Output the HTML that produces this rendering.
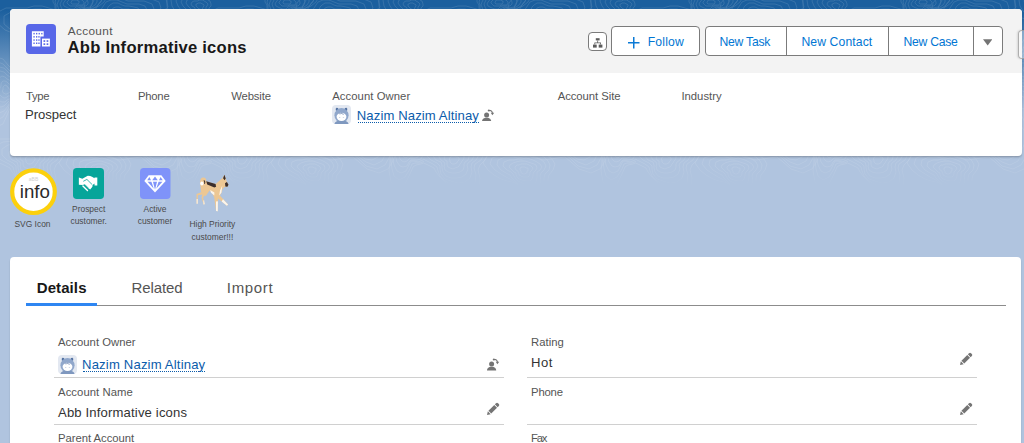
<!DOCTYPE html>
<html lang="en">
<head>
<meta charset="utf-8">
<title>Abb Informative icons | Account | Salesforce</title>
<style>
*{box-sizing:border-box;margin:0;padding:0}
html,body{width:1024px;height:443px;overflow:hidden}
body{position:relative;background:#b0c4df;font-family:"Liberation Sans",sans-serif;color:#181818}
.abs,.tx,.lbl{position:absolute}
.band{left:0;top:0;width:1024px;height:188px;background:linear-gradient(to bottom,#1b5f9e 0,#1b5f9e 10px,rgba(176,196,223,0) 112px)}
.band svg{position:absolute;left:0;top:0}
.card{background:#fff;border-radius:4px;box-shadow:0 2px 2px rgba(0,0,0,.10),0 1px 1px rgba(0,0,0,.12)}
#hl{left:10px;top:8.5px;width:1011.5px;height:147px;overflow:hidden}
#hl .hd{left:0;top:0;width:100%;height:64px;background:#f3f3f3}
#tabs{left:10.3px;top:256.5px;width:1010.7px;height:200px}
.tx{white-space:nowrap;line-height:20px;height:20px;text-decoration:none}

.dot{height:0;border-top:1px dotted #0b5cab}
.btn{background:#fff;border:1px solid #7b7b7b;border-radius:4px}
.sep{width:1px;background:#7b7b7b}
.hr{height:1px;background:#d0d0d0}
.lbl{font-size:8.44px;line-height:12.2px;color:#4a4a4a;text-align:center;white-space:nowrap;transform:translateX(-50%)}
</style>
</head>
<body>
<div class="abs band">
<svg width="1024" height="188" viewBox="0 0 1024 188"><defs><pattern id="ct" width="212" height="188" patternUnits="userSpaceOnUse"><path d="M43 30 42 31 42 32 41 32 40 33 40 33 39 34 37 34 36 34 35 34 34 33 34 32 34 31 34 30 34 29 34 28 34 28 35 27 36 26 37 26 39 26 40 27 41 27 42 27 43 28 43 29ZM48 30 46 32 45 33 44 34 43 36 41 37 39 38 37 39 34 39 32 37 31 35 31 33 31 31 30 30 29 28 29 26 30 25 32 24 34 23 37 22 39 23 41 24 43 24 46 25 48 26 49 28ZM52 30 49 32 48 34 47 36 46 39 43 41 40 42 36 44 31 43 28 41 28 37 28 34 28 32 25 30 24 27 24 24 26 22 29 20 32 19 36 18 40 19 43 21 46 21 50 22 53 24 54 27ZM56 30 52 33 51 35 51 39 49 42 46 45 41 47 35 48 29 47 26 44 25 39 26 35 25 32 21 30 18 26 18 22 22 19 26 17 31 15 36 15 40 16 44 17 48 18 54 19 58 22 59 26ZM60 30 55 33 54 36 54 41 53 47 48 51 42 53 34 53 28 51 24 46 23 40 24 35 22 33 17 30 12 25 12 19 17 16 23 14 29 12 35 11 41 12 46 14 51 16 57 17 63 20 64 25ZM64 30 58 34 57 38 59 44 57 52 51 57 42 58 34 56 27 53 22 48 22 41 22 36 19 34 11 30 4 24 4 16 11 12 20 10 28 10 35 9 41 9 47 11 53 13 61 15 67 18 69 24ZM68 30 62 35 61 39 63 47 62 57 54 63 43 63 33 59 26 54 21 49 20 42 20 37 15 34 5 30 -4 22 -4 13 6 8 18 8 27 8 34 6 42 6 49 8 56 10 64 12 72 16 74 23ZM126 14 126 15 126 16 124 16 123 16 122 16 121 17 119 17 118 17 116 17 115 16 115 16 114 15 114 14 115 13 115 13 116 12 117 11 118 10 119 11 121 11 122 11 123 11 124 12 125 12 126 13ZM133 14 133 16 131 17 128 18 125 18 123 19 121 20 119 21 115 21 112 21 110 19 109 17 109 16 109 14 110 12 111 11 112 10 113 8 116 7 119 7 121 8 123 9 126 9 129 9 131 10 133 12ZM140 14 138 17 136 19 131 20 127 20 124 21 122 23 118 25 113 26 108 24 106 22 104 19 104 16 104 14 105 12 107 10 108 7 110 5 113 3 118 3 122 5 125 6 129 6 134 7 138 8 140 11ZM146 14 143 17 139 20 134 22 129 22 126 23 122 26 117 29 109 31 103 28 101 24 100 20 99 17 99 14 100 11 102 8 104 5 106 2 111 -0 117 -0 122 2 127 4 132 4 139 4 145 6 147 10ZM151 14 147 18 142 21 137 23 132 24 128 26 123 30 116 34 106 36 99 33 96 27 97 21 96 17 95 14 95 10 97 7 99 3 103 -1 109 -4 116 -4 123 -1 128 1 135 1 144 1 152 4 154 9ZM156 14 149 18 144 22 140 24 135 27 130 29 124 34 115 40 103 41 94 37 93 29 95 22 95 18 92 14 90 10 91 5 94 0 99 -4 106 -8 116 -8 124 -5 130 -2 138 -2 149 -2 159 2 161 8ZM160 14 151 19 146 22 142 26 138 30 133 34 125 40 114 46 99 47 90 40 90 30 94 22 94 18 88 14 84 9 85 3 89 -2 95 -8 104 -12 115 -12 124 -8 132 -5 141 -4 154 -4 166 -1 168 7ZM184 70 184 71 184 72 183 73 183 75 182 75 181 75 180 74 179 74 178 73 177 73 176 72 176 71 175 70 175 69 176 67 177 67 178 66 179 66 180 66 180 65 182 65 183 66 183 67 184 68 184 69ZM189 70 188 72 187 74 187 77 186 79 183 80 181 80 179 78 178 77 176 77 174 76 172 75 171 73 170 70 170 67 171 65 173 63 176 63 178 63 179 62 181 61 183 60 185 61 187 63 188 65 188 68ZM193 70 192 73 191 77 190 80 188 83 185 85 182 84 179 82 177 80 174 80 171 80 167 78 165 74 165 70 165 66 167 62 171 61 174 60 177 60 179 58 182 56 185 55 188 56 190 60 191 63 192 67ZM197 70 196 75 195 79 193 83 191 88 187 90 182 89 178 85 176 83 172 83 167 83 162 81 159 76 159 70 161 65 164 61 168 58 173 58 176 58 178 54 182 50 187 48 192 51 194 56 195 61 196 65ZM201 70 201 76 199 81 196 86 193 91 188 94 182 93 178 89 175 86 170 87 162 88 156 85 153 78 154 70 158 64 162 59 167 56 171 56 175 54 178 50 183 44 190 41 195 45 197 52 198 59 199 65ZM204 70 205 77 203 84 199 89 195 95 190 99 183 98 178 93 173 90 167 91 158 92 149 88 147 79 150 70 155 63 160 58 165 55 170 53 174 51 177 44 184 37 192 33 199 39 201 49 201 58 202 64ZM207 70 210 78 207 86 203 93 197 98 191 102 183 102 177 98 172 95 164 96 153 97 143 92 140 81 147 70 155 63 160 58 164 54 168 50 172 46 177 38 184 29 195 26 203 33 204 46 202 57 203 63ZM77 95 77 96 77 97 75 98 73 98 72 98 71 99 69 99 68 99 66 99 65 98 64 97 63 96 64 95 64 94 65 93 65 92 66 91 68 91 69 91 71 91 72 91 73 92 74 92 75 93 76 94ZM84 95 85 98 84 100 80 101 76 101 73 101 71 102 69 103 65 103 62 102 60 101 58 99 57 97 57 95 59 93 60 91 61 89 62 87 65 86 68 86 71 87 74 88 76 89 79 90 81 91 83 93ZM92 95 93 99 90 102 84 104 78 103 75 103 72 105 68 107 63 108 58 107 54 104 51 102 50 98 51 95 53 92 55 90 56 87 58 83 62 81 68 82 72 84 75 85 79 86 83 87 87 89 90 92ZM100 95 100 100 96 104 88 106 80 105 76 105 72 108 67 112 60 114 53 112 49 108 46 104 44 99 45 95 48 91 51 88 52 84 54 80 60 77 67 77 73 80 77 82 82 83 89 84 95 86 98 90ZM108 95 106 101 100 106 91 108 82 107 77 107 73 112 66 117 56 120 47 117 43 111 40 106 39 100 40 95 43 90 46 87 48 82 51 76 57 72 66 73 73 77 79 80 85 80 95 80 103 83 107 89ZM114 95 110 102 103 107 93 109 84 109 78 110 74 116 65 124 52 127 42 123 37 115 36 107 35 101 36 95 38 90 42 85 43 79 47 72 55 67 65 68 74 73 80 77 89 76 101 76 111 80 116 87ZM120 95 113 102 105 107 95 110 86 111 80 113 75 121 64 131 48 135 35 129 32 118 34 108 33 101 32 95 33 89 36 83 39 76 43 68 52 62 64 63 75 69 82 74 92 73 107 72 121 77 124 86ZM155 140 155 141 155 142 154 143 154 144 152 145 151 145 149 144 148 144 147 143 146 142 146 142 145 141 144 140 144 139 144 138 145 137 147 136 148 136 149 136 151 136 152 136 153 137 154 137 155 138 156 139ZM161 140 160 142 159 144 159 146 158 148 155 150 152 150 149 148 146 147 144 146 143 145 142 143 140 142 138 140 137 138 137 135 140 134 144 133 146 133 149 132 151 132 154 132 156 133 159 134 161 136 162 138ZM167 140 165 143 164 145 163 149 162 153 158 155 152 154 148 152 145 150 142 148 139 147 137 145 134 143 131 140 129 136 131 132 135 130 141 130 145 130 148 129 152 128 156 128 160 129 163 131 166 134 167 137ZM173 140 170 144 169 147 168 152 166 157 160 160 153 159 148 155 144 152 140 151 136 150 131 147 127 144 123 140 121 135 124 130 131 127 139 128 144 128 148 126 153 124 158 123 164 125 168 128 171 132 173 136ZM178 140 176 145 174 149 173 155 170 161 162 165 154 162 147 157 143 154 138 153 131 152 124 150 119 146 115 140 114 133 118 127 127 125 137 126 143 126 147 124 153 120 161 118 168 121 172 125 176 130 179 135ZM184 140 182 146 179 151 177 158 173 165 165 169 154 166 147 159 142 155 136 155 126 156 116 153 110 147 107 140 107 132 113 125 124 123 136 124 143 125 147 121 154 115 164 112 173 115 177 122 181 128 184 134ZM190 140 188 147 184 153 181 161 176 169 167 173 155 169 147 162 141 157 133 158 120 160 107 157 100 149 99 140 102 131 110 124 122 122 135 123 142 124 147 118 155 110 167 105 178 110 183 118 185 126 188 133ZM35 160 34 161 34 161 33 162 33 163 32 163 31 164 29 164 28 164 27 163 26 162 26 161 26 161 26 160 25 159 26 158 26 157 27 157 28 156 29 156 31 156 32 157 33 157 34 157 35 158 35 159ZM39 160 38 161 37 163 36 164 35 166 34 167 31 168 29 169 26 168 24 167 23 165 23 163 23 161 21 160 20 158 21 156 22 155 24 154 26 153 29 152 31 153 33 154 35 154 38 155 40 156 40 158ZM44 160 41 162 40 164 40 167 39 170 36 172 32 173 28 173 24 172 21 170 20 166 21 164 20 162 17 160 15 157 15 154 18 152 21 150 25 149 28 149 32 149 35 150 38 151 42 152 45 154 45 157ZM48 160 44 163 43 165 44 169 42 174 38 177 33 178 27 178 22 176 19 172 18 168 18 165 17 162 12 160 9 156 9 152 13 149 18 147 23 146 28 145 32 146 36 147 40 148 45 150 49 152 50 156ZM52 160 48 163 47 167 48 172 46 178 41 182 34 183 27 181 21 179 17 174 16 169 16 166 13 163 7 160 2 155 2 149 8 145 15 144 22 143 27 142 33 143 38 144 43 146 49 147 54 150 55 155ZM57 160 51 164 50 168 52 175 51 183 44 188 34 187 26 184 20 180 16 176 14 171 13 167 9 164 1 160 -6 153 -5 146 3 142 13 141 21 141 27 140 33 139 40 141 46 143 52 145 58 149 60 154ZM61 160 56 165 54 170 56 178 55 188 47 193 35 192 26 186 20 181 15 176 12 172 10 168 4 165 -7 160 -15 152 -13 143 -2 139 11 139 20 140 27 138 34 136 41 137 49 139 56 143 63 147 65 153ZM109 60 109 61 109 61 108 62 108 62 107 62 106 62 106 62 105 62 104 62 104 62 103 61 103 61 103 60 103 59 104 59 104 58 104 58 105 58 106 58 106 58 107 58 107 58 108 59 108 59 109 59ZM113 60 113 61 112 63 111 63 109 63 108 63 107 64 105 64 104 64 103 64 101 63 100 62 100 61 100 60 101 59 101 58 102 57 102 56 104 55 105 55 107 56 108 56 109 57 110 57 111 58 112 59ZM116 60 116 62 115 64 113 65 110 65 108 65 107 65 105 66 103 67 101 66 99 65 98 64 97 62 97 60 98 59 99 57 100 56 101 54 103 53 105 53 107 54 108 55 110 55 112 56 114 57 115 58ZM120 60 120 63 118 65 114 66 111 66 109 66 107 67 105 69 101 70 98 69 96 67 95 65 94 62 95 60 96 58 97 56 98 54 99 52 101 50 105 51 107 52 109 53 112 54 114 54 117 55 119 58ZM123 60 123 63 120 66 116 67 112 66 109 66 107 69 104 72 100 73 96 72 94 69 92 66 92 63 92 60 94 58 95 55 96 53 97 50 100 48 104 48 107 50 110 52 113 52 117 52 121 54 123 57ZM126 60 125 64 122 67 117 68 112 67 110 68 108 71 104 75 98 77 93 75 91 71 90 67 90 63 90 60 92 57 93 55 94 51 95 48 99 45 104 46 108 49 111 50 114 50 120 50 125 52 127 56ZM129 60 126 64 123 67 118 68 113 68 110 69 108 73 103 79 96 81 90 78 89 72 89 67 89 63 88 60 89 57 91 54 92 50 94 46 98 43 103 43 108 47 111 49 116 48 123 48 129 50 131 55ZM204 6 203 7 203 7 203 8 202 9 202 9 201 10 200 9 199 9 198 8 198 8 197 7 197 7 196 6 196 5 196 4 197 4 198 3 199 3 200 3 200 3 201 3 202 4 203 4 203 4 204 5ZM207 6 206 7 206 9 206 10 205 12 203 13 201 13 199 12 197 12 196 11 195 9 195 8 194 7 192 6 191 4 192 2 194 1 196 1 198 1 199 0 201 0 203 0 204 1 206 2 207 3 208 4ZM211 6 209 8 209 10 209 12 208 15 205 17 202 17 199 15 197 14 195 12 193 11 192 10 190 8 188 6 186 3 187 0 190 -1 194 -1 197 -2 199 -2 201 -3 204 -3 206 -2 208 -0 210 1 211 4ZM214 6 213 9 212 11 212 15 210 19 207 21 202 20 198 18 196 15 193 14 191 13 189 11 186 9 183 6 181 2 183 -2 187 -4 192 -3 196 -3 199 -4 202 -6 205 -6 209 -4 211 -2 214 -0 215 3ZM218 6 216 9 215 13 215 17 213 22 208 25 202 23 198 19 195 17 192 15 188 15 185 13 181 10 178 6 176 1 178 -4 184 -6 191 -5 195 -4 198 -6 202 -9 207 -9 211 -8 214 -5 217 -2 219 2ZM222 6 220 10 218 14 218 19 216 25 210 28 203 26 198 21 195 17 191 17 185 17 180 15 175 11 172 6 171 -0 175 -5 182 -7 190 -6 195 -5 198 -8 203 -12 209 -13 214 -11 218 -7 220 -3 222 1ZM226 6 224 11 222 16 221 21 218 28 211 31 203 28 198 22 194 18 190 19 182 20 174 18 169 13 167 6 167 -1 172 -7 181 -8 190 -7 195 -6 198 -9 203 -15 211 -18 217 -15 221 -10 223 -4 226 1ZM10 90 10 91 10 92 9 93 8 93 7 94 6 94 6 94 5 94 4 93 3 93 3 92 2 91 3 90 3 89 3 88 3 87 4 86 5 85 6 85 6 86 7 86 8 87 8 88 9 88 9 89ZM14 90 14 93 14 95 12 96 10 96 8 96 7 97 5 98 4 98 2 97 1 96 -1 94 -1 92 -1 90 -0 88 1 86 1 84 2 82 3 81 5 81 7 82 8 83 9 84 11 85 11 86 13 88ZM18 90 19 94 17 97 14 99 11 99 9 99 7 100 5 102 2 102 -0 101 -2 99 -4 97 -5 93 -5 90 -3 87 -2 85 -2 82 -1 78 2 76 5 77 7 79 9 80 11 81 13 82 15 84 16 87ZM22 90 23 95 21 100 16 102 12 101 9 101 7 103 4 106 1 107 -3 106 -6 103 -8 99 -9 95 -8 90 -6 86 -4 83 -4 79 -3 74 0 71 4 72 7 75 10 77 13 78 16 79 18 82 21 85ZM27 90 27 96 24 102 18 104 13 102 10 102 8 106 4 111 -1 113 -6 111 -9 106 -11 101 -12 96 -11 90 -9 85 -7 82 -6 76 -5 70 -1 67 4 68 8 72 11 75 14 75 19 76 23 79 25 84ZM31 90 30 97 26 103 20 105 14 104 10 104 8 109 3 117 -3 120 -9 117 -12 110 -14 103 -14 96 -14 90 -11 85 -9 80 -8 74 -7 67 -2 62 3 64 8 69 11 72 16 72 22 72 28 76 30 82ZM35 90 32 98 27 104 21 106 14 105 11 106 8 113 3 124 -6 128 -12 123 -15 113 -16 104 -16 97 -16 90 -14 84 -12 78 -11 71 -9 63 -4 57 3 59 8 65 12 69 18 69 26 68 33 72 36 81ZM104 170 104 171 103 171 103 172 103 173 102 173 101 174 99 174 98 173 97 173 97 172 97 171 97 171 96 170 96 169 96 168 97 168 97 167 98 167 99 167 101 167 101 167 102 168 103 168 104 168 104 169ZM108 170 107 171 106 172 106 174 105 176 104 177 101 177 99 177 97 176 95 175 95 174 94 172 94 171 92 170 91 168 91 167 93 165 95 165 97 164 99 164 101 164 103 164 105 165 107 166 108 167 109 168ZM112 170 110 172 109 174 109 176 108 179 106 181 102 181 98 180 95 179 93 177 92 175 92 173 90 172 88 170 85 167 86 165 89 163 92 162 96 161 99 161 101 161 104 162 107 163 110 164 112 165 113 168ZM116 170 113 172 113 175 113 178 112 182 108 185 102 185 98 183 94 181 92 179 90 176 89 174 87 172 83 170 79 166 80 162 85 160 90 160 94 159 98 159 102 158 106 159 109 160 113 162 116 164 118 167ZM120 170 117 173 116 176 117 181 115 186 110 189 103 189 97 186 93 183 90 180 88 178 86 175 82 173 77 170 73 165 74 160 81 157 88 157 94 158 98 157 102 156 107 156 112 157 116 159 120 162 122 166ZM125 170 121 174 120 178 120 183 119 190 112 193 104 192 97 187 93 184 89 181 86 179 82 177 77 174 71 170 66 164 68 158 77 155 87 156 93 157 98 155 103 153 109 153 115 154 120 157 124 161 126 165ZM129 170 125 175 124 179 124 186 122 193 114 197 104 195 97 188 93 184 88 182 83 181 77 179 70 175 64 170 59 163 63 156 74 153 86 155 93 156 97 154 103 150 111 149 118 151 123 155 128 159 131 164ZM199 150 200 151 199 152 199 153 198 153 197 153 196 153 196 154 195 154 194 153 194 153 193 152 193 151 193 150 193 149 193 148 194 147 194 146 195 146 196 146 196 146 197 147 198 147 198 148 199 148 199 149ZM203 150 204 152 203 155 201 156 199 156 198 156 197 156 195 157 194 158 192 157 191 156 190 154 189 152 190 150 190 148 191 147 191 145 192 143 193 142 195 142 197 143 198 144 199 144 200 145 201 146 202 148ZM207 150 207 154 206 157 203 158 200 158 198 158 197 159 195 161 192 162 190 161 188 159 187 156 186 153 186 150 188 147 189 145 189 142 190 139 192 137 195 138 197 139 199 141 201 142 203 142 205 144 206 147ZM211 150 211 155 209 159 205 160 201 160 199 160 197 162 195 166 191 167 188 166 185 162 184 158 183 154 184 150 185 147 186 144 187 140 188 136 191 133 194 134 197 136 199 138 202 139 205 139 208 142 210 146ZM215 150 214 156 211 160 206 162 202 161 199 161 197 165 194 171 189 173 185 171 182 165 181 160 180 155 181 150 183 146 184 142 185 137 186 132 190 129 194 129 198 133 200 136 204 136 208 136 212 139 214 144ZM218 150 216 156 213 161 208 163 203 163 200 164 198 169 193 177 187 180 182 176 180 169 179 161 179 155 179 150 180 145 182 141 183 135 184 128 188 124 194 125 198 130 201 133 205 133 211 133 217 136 219 143ZM221 150 218 157 214 162 209 164 204 165 201 167 198 174 193 184 185 187 179 182 177 171 178 162 178 156 177 150 178 144 179 139 180 132 182 125 187 120 193 121 198 126 202 130 207 130 215 129 221 133 223 141ZM79 2 79 3 79 3 78 4 77 4 76 4 75 4 75 4 74 4 73 4 72 4 71 3 71 3 71 2 72 1 72 1 72 0 73 -0 74 -0 75 -0 75 -0 76 0 77 0 78 1 78 1 79 1ZM84 2 84 3 83 5 81 5 79 5 77 5 76 6 74 6 72 6 70 6 69 5 68 4 67 3 67 2 68 1 69 0 70 -1 70 -2 72 -3 74 -3 76 -2 77 -2 79 -1 80 -1 82 -0 83 1ZM88 2 88 4 86 6 83 6 80 6 78 6 76 7 74 9 71 9 68 8 66 7 64 6 63 4 64 2 65 1 66 -1 67 -2 68 -4 71 -5 74 -5 76 -4 78 -3 80 -3 83 -2 86 -1 87 0ZM93 2 92 5 90 7 85 8 81 7 78 8 76 9 73 11 69 12 65 11 62 9 61 7 60 4 61 2 62 0 64 -2 64 -4 66 -6 69 -8 73 -7 77 -6 79 -5 82 -5 86 -4 90 -3 92 -1ZM97 2 95 5 92 7 87 9 82 8 79 9 77 11 73 14 67 16 61 14 59 11 58 7 57 5 58 2 59 -0 61 -3 62 -5 64 -8 67 -10 73 -10 77 -8 80 -6 84 -6 90 -6 95 -4 97 -1ZM101 2 98 5 94 8 88 9 83 9 80 10 77 14 72 18 64 20 58 17 56 12 56 8 56 5 55 2 56 -1 58 -4 59 -7 61 -10 66 -13 72 -12 77 -10 81 -8 86 -8 94 -8 100 -6 102 -2ZM104 2 99 6 94 8 90 10 85 11 81 12 78 17 71 22 62 24 55 20 53 14 55 9 55 5 53 2 53 -1 54 -5 56 -8 59 -12 64 -15 72 -15 78 -12 82 -10 88 -10 97 -10 105 -8 107 -3Z" fill="none" stroke="#fff" stroke-width=".7"/></pattern><linearGradient id="cf" x1="0" y1="0" x2="0" y2="1"><stop offset="0" stop-color="#fff" stop-opacity=".17"/><stop offset=".88" stop-color="#fff" stop-opacity=".14"/><stop offset="1" stop-color="#fff" stop-opacity="0"/></linearGradient><mask id="cm"><rect width="1024" height="188" fill="url(#cf)"/></mask></defs><rect width="1024" height="188" fill="url(#ct)" mask="url(#cm)"/></svg>
</div>

<!-- highlights panel -->
<div id="hl" class="abs card"><div class="abs hd"></div></div>

<!-- account icon -->
<svg class="abs" style="left:26px;top:24px" width="30" height="30" viewBox="0 0 30 30">
<rect width="30" height="30" rx="3.75" fill="#5867e8"/>
<path d="M5.9 7.2h11.8v5.4h-3.3v9.9H5.9z" fill="#fff"/>
<rect x="16" y="14.6" width="7.9" height="7.9" fill="#fff"/>
<g fill="#5867e8">
<rect x="7.4" y="8.9" width="1.3" height="1.5"/><rect x="10" y="8.9" width="1.3" height="1.5"/><rect x="12.6" y="8.9" width="1.3" height="1.5"/><rect x="15.2" y="8.9" width="1.3" height="1.5"/>
<rect x="7.4" y="12.1" width="1.3" height="1.5"/><rect x="10" y="12.1" width="1.3" height="1.5"/><rect x="12.3" y="12.1" width="1.3" height="1.5"/>
<rect x="7.4" y="15.3" width="1.3" height="1.5"/><rect x="10" y="15.3" width="1.3" height="1.5"/><rect x="12.3" y="15.3" width="1.3" height="1.5"/>
<rect x="7.4" y="18.5" width="1.3" height="1.5"/><rect x="10" y="18.5" width="1.3" height="1.5"/><rect x="12.3" y="18.5" width="1.3" height="1.5"/>
<rect x="17.5" y="16.2" width="1.7" height="1.7"/><rect x="20.6" y="16.2" width="1.7" height="1.7"/>
<rect x="17.5" y="19.3" width="1.7" height="1.7"/><rect x="20.6" y="19.3" width="1.7" height="1.7"/>
</g>
</svg>

<!-- hierarchy button -->
<div class="abs btn" style="left:588.2px;top:32px;width:18.8px;height:18.8px"></div>
<svg class="abs" style="left:592px;top:37px" width="12" height="12" viewBox="0 0 12 12" fill="#5c5c5c">
<rect x="3.8" y="1.2" width="3.8" height="2.2"/><rect x="1" y="7.6" width="3.7" height="3"/><rect x="6.7" y="7.6" width="3.7" height="3"/>
<path d="M5.3 3.4h.8v2h2.9v2.2h-.8V6.2H3.2v1.4h-.8V5.4h2.9z"/>
</svg>

<!-- follow button -->
<div class="abs btn" style="left:611.2px;top:25.8px;width:89.2px;height:30px"></div>
<svg class="abs" style="left:628px;top:37px" width="12" height="12" viewBox="0 0 12 12"><path d="M5.75 0v11.5M0 5.75h11.5" stroke="#0b7ad6" stroke-width="1.5" fill="none"/></svg>

<!-- button group -->
<div class="abs btn" style="left:704.6px;top:25.8px;width:298.6px;height:30px"></div>
<div class="abs sep" style="left:786px;top:26px;height:29.6px"></div>
<div class="abs sep" style="left:888px;top:26px;height:29.6px"></div>
<div class="abs sep" style="left:972.6px;top:26px;height:29.6px"></div>
<svg class="abs" style="left:983px;top:39.3px" width="9.4" height="6.6" viewBox="0 0 9.4 6.6"><path d="M0 .3h9.4L4.7 6.6z" fill="#747474"/></svg>

<!-- edge widget peeking on the right -->
<div class="abs" style="left:1018.400px;top:29.700px;width:12px;height:29.300px;background:rgba(255,255,255,.38);border:1px solid rgba(150,150,150,.75);border-radius:4px;box-shadow:-1px 0 2px rgba(0,0,0,.12)"></div>

<!-- owner avatar (highlights) -->
<svg class="abs" style="left:332.3px;top:104.8px" width="19" height="19" viewBox="0 0 19 19">
<rect width="19" height="19" rx="4" fill="#e3e8f1"/>
<ellipse cx="5.300" cy="4.900" rx="1.500" ry="2.300" fill="#4f6e9f" transform="rotate(-18 5.300 4.900)"/><ellipse cx="13.700" cy="4.900" rx="1.500" ry="2.300" fill="#4f6e9f" transform="rotate(18 13.700 4.900)"/>
<ellipse cx="9.500" cy="10.300" rx="7.100" ry="7.300" fill="#90a7cb"/>
<path d="M2.400 19c.6-2.600 3.300-3.800 7.100-3.800s6.500 1.200 7.100 3.800z" fill="#7f98bf"/>
<ellipse cx="9.500" cy="11.800" rx="4.900" ry="4.100" fill="#fff"/>
<path d="M6.800 8.500c1.200.6 2.400.2 3.100-.7-.2 1 .7 1.700 1.900 1.400" fill="none" stroke="#5b79a8" stroke-width=".7"/>
<rect x="7" y="12.100" width="1.300" height=".8" fill="#c5cfe0"/><rect x="10.800" y="12.100" width="1.300" height=".8" fill="#c5cfe0"/>
</svg>
<div class="abs dot" style="left:357.700px;top:121.700px;width:121.400px"></div>
<!-- change owner icon -->
<svg class="abs" style="left:482px;top:108.500px" width="12.500" height="12.500" viewBox="0 0 12.500 12.500" fill="#747474">
<circle cx="4.600" cy="6.100" r="2.500"/><path d="M0 12.500c0-2.300 1.600-3.200 3.200-3.700h2.800c1.600.500 3.200 1.400 3.200 3.700z"/>
<path d="M6 1.600C8.400.8 10.200 2 10.500 4.200" fill="none" stroke="#747474" stroke-width="1.100"/><path d="M8.800 3.800h3.400l-1.800 2.400z"/><path d="M6.900.2L5.600 1.900l2 .9z"/>
</svg>

<!-- informative icons row -->
<svg class="abs" style="left:9.600px;top:168.400px" width="47" height="47.400" viewBox="0 0 47 47.400">
<circle cx="23.500" cy="23.700" r="21.300" fill="#fff" stroke="#fcd00c" stroke-width="4.200"/>
<text x="23.500" y="12.700" font-family="Liberation Sans, sans-serif" font-size="5" fill="#cfcfcf" text-anchor="middle">aBB</text>
<text x="24.800" y="30.100" font-family="Liberation Sans, sans-serif" font-size="18.700" fill="#2a2a2a" text-anchor="middle">info</text>
</svg>
<div class="lbl" style="left:32.500px;top:217.600px">SVG Icon</div>

<svg class="abs" style="left:73.200px;top:167.900px" width="31" height="31" viewBox="0 0 31 31">
<rect width="31" height="31" rx="3.750" fill="#06a59a"/>
<path d="M5.850 9.500L9.350 10.850 12 9.300 14.800 7.700 17.200 8 19 8.800 21.500 10.200 21.500 9.500 24.300 9.500 24.300 17.600 21.500 17.600 21.500 15.600 19.600 17 19.400 18.800 17.200 21.400 15.200 20.300 11.400 16.500 9.350 17.100 5.850 16.700Z" fill="#fff"/>
<path d="M9.900 18L14.500 22.400" stroke="#fff" stroke-width="1.400" stroke-linecap="round" fill="none"/>
<path d="M10.300 13.300L13.900 11.400 19.200 16.600M11.600 16.300L15.600 20.400" stroke="#06a59a" stroke-width=".8" fill="none"/>
</svg>
<div class="lbl" style="left:88.700px;top:203.200px">Prospect<br>customer.</div>

<svg class="abs" style="left:140px;top:167.900px" width="30.500" height="31" viewBox="0 0 30.500 31">
<rect width="30.500" height="31" rx="3.750" fill="#7f93f9"/>
<path d="M8.600 7.200h12.800l4.300 5.700-10.700 11.600L4.300 12.900z" fill="#fff"/>
<g fill="#7f93f9">
<path d="M7.200 12.200l2.200-3.200 1.600 3.200zM12.200 12.200L15 8.600l2.800 3.600zM19 12.200l1.600-3.200 2.200 3.200z"/>
<path d="M7.600 13.800h3.800l2.400 7zM13 13.800h4l-2 8zM18.600 13.800h3.800l-6.200 7z"/>
</g>
</svg>
<div class="lbl" style="left:155px;top:203.200px">Active<br>customer</div>

<!-- dog -->
<svg class="abs" style="left:194px;top:172px" width="38" height="42" viewBox="194 172 38 42">
<path d="M206 181.200L215.600 184.100 222.300 178.300 224.400 174.800 225.800 178.800 226.900 182 228.500 184.800 227.400 186.700 224.400 187 222.700 188.800 221.500 193 219.900 195.600 228.100 204.500 226.900 205.800 218 198.600 217.800 211.200 216 211 214.300 197.800 213 194.800 209.600 190.600 207.600 193.200 206 195.800 204.300 195.800 203.100 197.800 204.700 204.200 203.500 204.500 201.500 197.400 202.300 194.600 198 195.200 197.700 203.800 196.600 203.700 196.500 194 201.200 192.200 200.600 186.500C199.400 182.500 199.800 178 203 177.500 205.500 177.300 206.800 179.300 206 181.200Z" fill="#ecc794"/>
<path d="M206.200 181.200L215.600 184.100 216.100 186.800 214.400 187.600 207.200 184.400Z" fill="#3a2e2c"/>
<path d="M224.400 174.800L225.700 178.600 224.600 180.200 223.100 178.200ZM225 183.200L226.900 182 228.500 184.800 227.400 186.700 225.400 186.600Z" fill="#3a2e2c"/>
<ellipse cx="201.900" cy="183.500" rx="1.700" ry="2" fill="#fff"/>
<path d="M204.200 180.200c1.200.600 1.400 2.200.800 3.600l-.900.200c.300-1.400.200-2.600-.600-3.400z" fill="#3a2e2c"/>
<path d="M222.300 185.600L221.400 192.800 219.200 195.400 220 190.400ZM210.200 190L214.400 192.600 214.300 195.400 211 192.800ZM216 201.500L217.900 201.200 217.800 211.200 216 211ZM223 199.200L228.100 204.500 226.900 205.800 221.600 201.400ZM196.600 199L197.700 199 197.700 203.800 196.600 203.700ZM203.400 200.500L204.100 200.300 204.700 204.200 203.500 204.500Z" fill="#fbf5ec"/>
</svg>
<div class="lbl" style="left:212.400px;top:218.300px">High Priority<br>customer!!!</div>

<!-- tabs / details card -->
<div id="tabs" class="abs card"></div>
<div class="abs" style="left:25.800px;top:305px;width:980.400px;height:1px;background:#8c8c8c"></div>
<div class="abs" style="left:25.800px;top:303px;width:71.100px;height:3px;background:#2e86f2"></div>

<!-- field separators -->
<div class="abs hr" style="left:54.200px;top:377.200px;width:450px"></div>
<div class="abs hr" style="left:54.200px;top:424px;width:450px"></div>
<div class="abs hr" style="left:527px;top:377.200px;width:450.300px"></div>
<div class="abs hr" style="left:527px;top:424px;width:450.300px"></div>

<!-- owner avatar (details) -->
<svg class="abs" style="left:58px;top:354.800px" width="19" height="19" viewBox="0 0 19 19">
<rect width="19" height="19" rx="4" fill="#e3e8f1"/>
<ellipse cx="5.300" cy="4.900" rx="1.500" ry="2.300" fill="#4f6e9f" transform="rotate(-18 5.300 4.900)"/><ellipse cx="13.700" cy="4.900" rx="1.500" ry="2.300" fill="#4f6e9f" transform="rotate(18 13.700 4.900)"/>
<ellipse cx="9.500" cy="10.300" rx="7.100" ry="7.300" fill="#90a7cb"/>
<path d="M2.400 19c.6-2.600 3.300-3.800 7.100-3.800s6.500 1.200 7.100 3.800z" fill="#7f98bf"/>
<ellipse cx="9.500" cy="11.800" rx="4.900" ry="4.100" fill="#fff"/>
<path d="M6.800 8.500c1.200.6 2.400.2 3.100-.7-.2 1 .7 1.700 1.900 1.400" fill="none" stroke="#5b79a8" stroke-width=".7"/>
<rect x="7" y="12.100" width="1.300" height=".8" fill="#c5cfe0"/><rect x="10.800" y="12.100" width="1.300" height=".8" fill="#c5cfe0"/>
</svg>
<div class="abs dot" style="left:83.200px;top:371.200px;width:122px"></div>
<svg class="abs" style="left:487px;top:358px" width="12.500" height="12.500" viewBox="0 0 12.500 12.500" fill="#747474">
<circle cx="4.600" cy="6.100" r="2.500"/><path d="M0 12.500c0-2.300 1.600-3.200 3.200-3.700h2.800c1.600.5 3.200 1.400 3.200 3.700z"/>
<path d="M6 1.600C8.400.8 10.200 2 10.500 4.200" fill="none" stroke="#747474" stroke-width="1.100"/><path d="M8.800 3.800h3.400l-1.800 2.400z"/><path d="M6.900.2L5.600 1.900l2 .9z"/>
</svg>

<!-- pencils -->
<svg class="abs" style="left:485px;top:401.100px" width="16" height="16" viewBox="-2 -14 16 16"><g transform="rotate(-45) scale(.94)" fill="#747474"><path d="M0 0l3.400-2.100v4.200z"/><rect x="4.300" y="-2.100" width="8.700" height="4.200"/><path d="M13.900-2.100h1.800a1.500 1.500 0 0 1 1.500 1.500v1.200a1.500 1.500 0 0 1-1.500 1.500h-1.800z"/></g></svg>
<svg class="abs" style="left:957.600px;top:350.600px" width="16" height="16" viewBox="-2 -14 16 16"><g transform="rotate(-45) scale(.94)" fill="#747474"><path d="M0 0l3.400-2.100v4.200z"/><rect x="4.300" y="-2.100" width="8.700" height="4.200"/><path d="M13.900-2.100h1.800a1.500 1.500 0 0 1 1.500 1.500v1.200a1.500 1.500 0 0 1-1.500 1.500h-1.800z"/></g></svg>
<svg class="abs" style="left:957.600px;top:401.400px" width="16" height="16" viewBox="-2 -14 16 16"><g transform="rotate(-45) scale(.94)" fill="#747474"><path d="M0 0l3.400-2.100v4.200z"/><rect x="4.300" y="-2.100" width="8.700" height="4.200"/><path d="M13.900-2.100h1.800a1.500 1.500 0 0 1 1.500 1.500v1.200a1.500 1.500 0 0 1-1.500 1.500h-1.800z"/></g></svg>

<span id="t_acc" class="tx" style="left:67.71px;top:21.00px;font-size:11.8px;font-weight:400;color:#555555;letter-spacing:0.348px">Account</span>
<span id="t_title" class="tx" style="left:67.60px;top:38.00px;font-size:16.6px;font-weight:700;color:#181818;letter-spacing:0.235px">Abb Informative icons</span>
<span id="t_type" class="tx" style="left:25.93px;top:86.00px;font-size:11.3px;font-weight:400;color:#555555;letter-spacing:-0.263px">Type</span>
<span id="t_pros" class="tx" style="left:25.09px;top:105.00px;font-size:13.1px;font-weight:400;color:#333333;letter-spacing:-0.041px">Prospect</span>
<span id="t_phone" class="tx" style="left:138.00px;top:86.00px;font-size:11.3px;font-weight:400;color:#555555;letter-spacing:-0.243px">Phone</span>
<span id="t_web" class="tx" style="left:231.31px;top:86.00px;font-size:11.3px;font-weight:400;color:#555555;letter-spacing:-0.163px">Website</span>
<span id="t_own" class="tx" style="left:332.18px;top:86.00px;font-size:11.3px;font-weight:400;color:#555555;letter-spacing:0.062px">Account Owner</span>
<a id="t_naz" class="tx lnk" style="left:356.77px;top:106.00px;font-size:13.1px;font-weight:400;color:#0b5cab;letter-spacing:0.112px">Nazim Nazim Altinay</a>
<span id="t_site" class="tx" style="left:557.67px;top:86.00px;font-size:11.3px;font-weight:400;color:#555555;letter-spacing:-0.047px">Account Site</span>
<span id="t_ind" class="tx" style="left:681.39px;top:86.00px;font-size:11.3px;font-weight:400;color:#555555;letter-spacing:0.011px">Industry</span>
<span id="t_fol" class="tx" style="left:647.78px;top:32.00px;font-size:12.2px;font-weight:400;color:#0176d3;letter-spacing:0.145px">Follow</span>
<span id="t_task" class="tx" style="left:719.48px;top:32.00px;font-size:12.2px;font-weight:400;color:#0176d3;letter-spacing:-0.238px">New Task</span>
<span id="t_cont" class="tx" style="left:801.40px;top:32.00px;font-size:12.2px;font-weight:400;color:#0176d3;letter-spacing:0.107px">New Contact</span>
<span id="t_case" class="tx" style="left:903.40px;top:32.00px;font-size:12.2px;font-weight:400;color:#0176d3;letter-spacing:-0.256px">New Case</span>
<span id="t_det" class="tx" style="left:36.72px;top:278.00px;font-size:15.0px;font-weight:700;color:#181818;letter-spacing:0.094px">Details</span>
<span id="t_rel" class="tx" style="left:131.38px;top:278.00px;font-size:15.0px;font-weight:400;color:#555555;letter-spacing:-0.076px">Related</span>
<span id="t_imp" class="tx" style="left:226.86px;top:278.00px;font-size:15.0px;font-weight:400;color:#555555;letter-spacing:0.640px">Import</span>
<span id="f_own" class="tx" style="left:58.05px;top:332.00px;font-size:11.3px;font-weight:400;color:#555555;letter-spacing:0.028px">Account Owner</span>
<a id="f_naz" class="tx lnk" style="left:82.06px;top:355.00px;font-size:13.1px;font-weight:400;color:#0b5cab;letter-spacing:0.170px">Nazim Nazim Altinay</a>
<span id="f_anl" class="tx" style="left:58.05px;top:382.00px;font-size:11.3px;font-weight:400;color:#555555;letter-spacing:0.058px">Account Name</span>
<span id="f_anv" class="tx" style="left:58.00px;top:403.00px;font-size:13.1px;font-weight:400;color:#333333;letter-spacing:0.155px">Abb Informative icons</span>
<span id="f_par" class="tx" style="left:57.96px;top:428.00px;font-size:11.3px;font-weight:400;color:#555555;letter-spacing:-0.025px">Parent Account</span>
<span id="f_rat" class="tx" style="left:531.12px;top:332.00px;font-size:11.3px;font-weight:400;color:#555555;letter-spacing:-0.012px">Rating</span>
<span id="f_hot" class="tx" style="left:531.09px;top:353.00px;font-size:13.1px;font-weight:400;color:#333333;letter-spacing:0.500px">Hot</span>
<span id="f_pho" class="tx" style="left:531.12px;top:382.00px;font-size:11.3px;font-weight:400;color:#555555;letter-spacing:-0.200px">Phone</span>
<span id="f_fax" class="tx" style="left:531.03px;top:428.00px;font-size:11.3px;font-weight:400;color:#555555;letter-spacing:-1.229px">Fax</span>
</body>
</html>
